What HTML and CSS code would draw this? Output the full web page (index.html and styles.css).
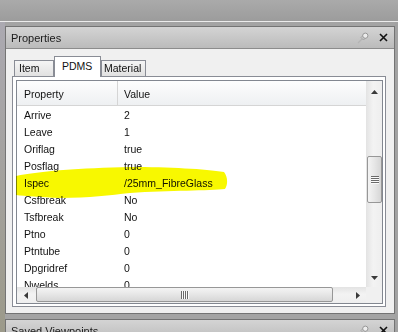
FILE: index.html
```html
<!DOCTYPE html>
<html lang="en">
<head>
    <meta charset="UTF-8">
    <title>Properties</title>
    <link rel="stylesheet" href="styles.css">
</head>
<body>
    <div class="topbar"></div>
    <div class="dock">
        <div class="edge-left"></div>
        <div class="stack">
            <section class="pane">
                <header class="pane-title">
                    <span>Properties</span>
                    <span class="pane-tools">
                        <svg class="pin" width="12" height="12" viewBox="0 0 12 12">
                            <line x1="1" y1="11" x2="5" y2="7" stroke="#b4b4b4" stroke-width="1.2"/>
                            <path d="M4 5.5 L6.5 8 L9 5.5 L6.5 3 Z" fill="#c9c9c9" stroke="#9a9a9a" stroke-width="0.8"/>
                            <circle cx="8.3" cy="3.7" r="2.6" fill="#ececec" stroke="#8e8e8e" stroke-width="0.9"/>
                        </svg>
                        <svg class="close" width="9" height="9" viewBox="0 0 9 9">
                            <path d="M1 1 L8 8 M8 1 L1 8" stroke="#111" stroke-width="1.6"/>
                        </svg>
                    </span>
                </header>
                <div class="pane-body">
                    <div class="tabs">
                        <div class="tab tab-item">Item</div>
                        <div class="tab tab-pdms active">PDMS</div>
                        <div class="tab tab-material">Material</div>
                    </div>
                    <div class="tab-page">
                        <div class="grid">
                            <div class="grid-main">
                                <div class="grid-view">
                                    <div class="grid-head">
                                        <div class="c-prop">Property</div>
                                        <div class="c-val">Value</div>
                                    </div>
                                    <div class="row"><div class="c-prop">Arrive</div><div class="c-val">2</div></div>
                                    <div class="row"><div class="c-prop">Leave</div><div class="c-val">1</div></div>
                                    <div class="row"><div class="c-prop">Oriflag</div><div class="c-val">true</div></div>
                                    <div class="row"><div class="c-prop">Posflag</div><div class="c-val">true</div></div>
                                    <div class="row"><div class="c-prop">Ispec</div><div class="c-val">/25mm_FibreGlass</div></div>
                                    <div class="row"><div class="c-prop">Csfbreak</div><div class="c-val">No</div></div>
                                    <div class="row"><div class="c-prop">Tsfbreak</div><div class="c-val">No</div></div>
                                    <div class="row"><div class="c-prop">Ptno</div><div class="c-val">0</div></div>
                                    <div class="row"><div class="c-prop">Ptntube</div><div class="c-val">0</div></div>
                                    <div class="row"><div class="c-prop">Dpgridref</div><div class="c-val">0</div></div>
                                    <div class="row"><div class="c-prop">Nwelds</div><div class="c-val">0</div></div>
                                </div>
                                <div class="vscroll">
                                    <div class="vs-btn vs-up">
                                        <svg width="7" height="4" viewBox="0 0 7 4"><path d="M0 4 L3.5 0 L7 4 Z" fill="#3a3a3a"/></svg>
                                    </div>
                                    <div class="vs-track">
                                        <div class="vs-thumb">
                                            <svg width="8" height="8" viewBox="0 0 8 8">
                                                <path d="M0 0.5 H8 M0 2.5 H8 M0 4.5 H8 M0 6.5 H8" stroke="#6a6a6a" stroke-width="1"/>
                                                <path d="M0 1.5 H8 M0 3.5 H8 M0 5.5 H8 M0 7.5 H8" stroke="#fafafa" stroke-width="1"/>
                                            </svg>
                                        </div>
                                    </div>
                                    <div class="vs-btn vs-down">
                                        <svg width="7" height="4" viewBox="0 0 7 4"><path d="M0 0 L7 0 L3.5 4 Z" fill="#3a3a3a"/></svg>
                                    </div>
                                </div>
                            </div>
                            <div class="hscroll-row">
                                <div class="hscroll">
                                    <div class="hs-btn hs-left">
                                        <svg width="4" height="7" viewBox="0 0 4 7"><path d="M4 0 L4 7 L0 3.5 Z" fill="#3a3a3a"/></svg>
                                    </div>
                                    <div class="hs-track">
                                        <div class="hs-thumb">
                                            <svg width="8" height="8" viewBox="0 0 8 8">
                                                <path d="M0.5 0 V8 M2.5 0 V8 M4.5 0 V8 M6.5 0 V8" stroke="#6a6a6a" stroke-width="1"/>
                                                <path d="M1.5 0 V8 M3.5 0 V8 M5.5 0 V8 M7.5 0 V8" stroke="#fafafa" stroke-width="1"/>
                                            </svg>
                                        </div>
                                    </div>
                                    <div class="hs-btn hs-right">
                                        <svg width="4" height="7" viewBox="0 0 4 7"><path d="M0 0 L4 3.5 L0 7 Z" fill="#3a3a3a"/></svg>
                                    </div>
                                </div>
                                <div class="corner"></div>
                            </div>
                        </div>
                    </div>
                </div>
            </section>
            <section class="pane pane-next">
                <header class="pane-title">
                    <span>Saved Viewpoints</span>
                    <span class="pane-tools">
                        <svg class="pin" width="12" height="12" viewBox="0 0 12 12">
                            <line x1="1" y1="11" x2="5" y2="7" stroke="#b4b4b4" stroke-width="1.2"/>
                            <path d="M4 5.5 L6.5 8 L9 5.5 L6.5 3 Z" fill="#c9c9c9" stroke="#9a9a9a" stroke-width="0.8"/>
                            <circle cx="8.3" cy="3.7" r="2.6" fill="#ececec" stroke="#8e8e8e" stroke-width="0.9"/>
                        </svg>
                        <svg class="close" width="9" height="9" viewBox="0 0 9 9">
                            <path d="M1 1 L8 8 M8 1 L1 8" stroke="#111" stroke-width="1.6"/>
                        </svg>
                    </span>
                </header>
            </section>
        </div>
        <div class="edge-right"></div>
    </div>

    <!-- highlighter stroke drawn over the Ispec row -->
    <svg class="marker" width="398" height="332" viewBox="0 0 398 332">
        <path d="M16 176 C40 171 80 168 130 167 C170 167 205 169 224 172 C228 177 228 185 225 189 C210 191 170 190 130 193 C110 195 90 198 60 198 C40 197 25 196 16 195 Z" fill="#f8f800"/>
    </svg>
</body>
</html>
```

FILE: styles.css
```css
* {
    box-sizing: border-box;
}
html, body {
    margin: 0;
    padding: 0;
}
body {
    position: relative;
    width: 398px;
    height: 332px;
    overflow: hidden;
    background: #a4a4a4;
    font-family: "Liberation Sans", Arial, sans-serif;
    font-size: 10.5px;
    color: #111;
}
.topbar {
    height: 22px;
    background: linear-gradient(#aaaaaa, #9c9c9c);
    border-bottom: 1px solid #ececec;
}
.dock {
    display: flex;
    height: 310px;
}
.edge-left {
    width: 5px;
    background: linear-gradient(#aba9b1, #9c9a8a);
}
.edge-right {
    width: 3px;
    background: #a2a2a2;
}
.stack {
    flex: 1;
    display: flex;
    flex-direction: column;
    gap: 5px;
    padding-top: 4px;
}
.pane {
    border: 1px solid #747474;
    background: #f0f0f0;
}
.pane-next {
    flex: 1;
}
.pane-title {
    height: 22px;
    display: flex;
    align-items: center;
    justify-content: space-between;
    padding: 0 6px 0 5px;
    background: linear-gradient(#d4d4d4, #bbbbbb);
    border-bottom: 1px solid #8c8c8c;
    font-size: 11px;
    color: #1a1a1a;
}
.pane-tools {
    display: flex;
    align-items: center;
    gap: 10px;
}
.pane-tools svg {
    display: block;
}
.pane-body {
    padding: 7px 8px 6px 6px;
}

/* tabs */
.tabs {
    display: flex;
    align-items: flex-end;
    height: 20px;
    padding-left: 2px;
}
.tab {
    height: 16px;
    line-height: 15px;
    border: 1px solid #898c95;
    border-bottom: none;
    background: linear-gradient(#f5f5f5, #e1e1e1);
}
.tab-item {
    width: 40px;
    padding-left: 4px;
}
.tab-pdms {
    width: 47px;
    padding-left: 7px;
}
.tab-material {
    width: 45px;
    padding-left: 2px;
}
.tab.active {
    position: relative;
    z-index: 1;
    height: 21px;
    line-height: 19px;
    margin-bottom: -1px;
    background: #fff;
}
.tab-page {
    height: 231px;
    border: 1px solid #898c95;
    background: #fff;
    padding: 3px 2px 2px 3px;
}

/* property grid */
.grid {
    height: 224px;
    border: 1px solid #828790;
    background: #fff;
    display: flex;
    flex-direction: column;
}
.grid-main {
    flex: 1;
    display: flex;
    min-height: 0;
}
.grid-view {
    flex: 1;
    overflow: hidden;
}
.grid-head {
    display: flex;
    height: 25px;
    padding-top: 2px;
    border-bottom: 1px solid #d5d5d5;
    background: linear-gradient(#fdfdfd, #eef0f2);
}
.grid-head > div {
    display: flex;
    align-items: center;
}
.c-prop {
    width: 101px;
    padding-left: 7px;
}
.grid-head .c-prop {
    border-right: 1px solid #d5d5d5;
    margin-top: -2px;
    padding-top: 2px;
}
.c-val {
    padding-left: 6px;
    white-space: nowrap;
}
.row {
    display: flex;
    align-items: center;
    height: 17px;
}

/* scrollbars */
.vscroll {
    width: 16px;
    display: flex;
    flex-direction: column;
    background: linear-gradient(90deg, #e3e3e3, #f3f3f3 45%, #eeeeee);
}
.vs-btn, .hs-btn {
    display: flex;
    align-items: center;
    justify-content: center;
}
.vs-btn svg, .hs-btn svg, .vs-thumb svg, .hs-thumb svg {
    display: block;
}
.vs-up {
    height: 22px;
}
.vs-down {
    height: 19px;
}
.vs-track {
    flex: 1;
    padding-top: 53px;
}
.vs-thumb {
    width: 15px;
    height: 47px;
    margin-left: 1px;
    border: 1px solid #979797;
    border-radius: 2px;
    background: linear-gradient(90deg, #f4f4f4, #e6e6e6 50%, #d6d6d6);
    display: flex;
    align-items: center;
    justify-content: center;
}
.hscroll-row {
    height: 16px;
    display: flex;
}
.hscroll {
    flex: 1;
    display: flex;
    background: linear-gradient(#e3e3e3, #f3f3f3 45%, #eeeeee);
}
.hs-left {
    width: 18px;
}
.hs-right {
    width: 17px;
}
.hs-track {
    flex: 1;
    padding-left: 1px;
}
.hs-thumb {
    width: 297px;
    height: 15px;
    border: 1px solid #979797;
    border-radius: 2px;
    background: linear-gradient(#f4f4f4, #e6e6e6 50%, #d6d6d6);
    display: flex;
    align-items: center;
    justify-content: center;
}
.corner {
    width: 16px;
    background: #f0f0f0;
}

/* yellow highlighter */
.marker {
    position: absolute;
    top: 0;
    left: 0;
    pointer-events: none;
    mix-blend-mode: multiply;
}
```
